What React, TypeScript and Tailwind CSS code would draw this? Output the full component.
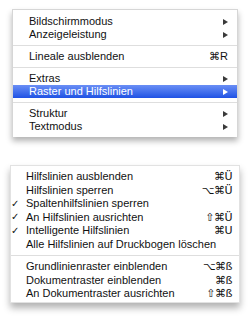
import React from "react";

type Item =
  | { sep: true }
  | { sep?: false; label: string; sub?: boolean; keys?: string; checked?: boolean; active?: boolean };

const topItems: Item[] = [
  { label: "Bildschirmmodus", sub: true },
  { label: "Anzeigeleistung", sub: true },
  { sep: true },
  { label: "Lineale ausblenden", keys: "⌘R" },
  { sep: true },
  { label: "Extras", sub: true },
  { label: "Raster und Hilfslinien", sub: true, active: true },
  { sep: true },
  { label: "Struktur", sub: true },
  { label: "Textmodus", sub: true },
];

const guideItems: Item[] = [
  { label: "Hilfslinien ausblenden", keys: "⌘Ü" },
  { label: "Hilfslinien sperren", keys: "⌥⌘Ü" },
  { label: "Spaltenhilfslinien sperren", checked: true },
  { label: "An Hilfslinien ausrichten", keys: "⇧⌘Ü", checked: true },
  { label: "Intelligente Hilfslinien", keys: "⌘U", checked: true },
  { label: "Alle Hilfslinien auf Druckbogen löschen" },
  { sep: true },
  { label: "Grundlinienraster einblenden", keys: "⌥⌘ß" },
  { label: "Dokumentraster einblenden", keys: "⌘ß" },
  { label: "An Dokumentraster ausrichten", keys: "⇧⌘ß" },
];

function Arrow({ light }: { light?: boolean }) {
  return (
    <svg width="5" height="6" viewBox="0 0 5 6" className="shrink-0">
      <path d="M0 0 L5 3 L0 6 Z" fill={light ? "#ffffff" : "#3a3a3a"} />
    </svg>
  );
}

function TopMenu() {
  return (
    <div className="ml-[12px] w-[226px] border-x border-t border-[#d6d6d6] bg-white pt-[5px] pb-[4px] shadow-[0_4px_6px_rgba(0,0,0,0.3)]">
      {topItems.map((it, i) =>
        it.sep ? (
          <div key={i} className="my-[4px] h-px bg-[#dedede]" />
        ) : (
          <div
            key={i}
            className={`flex h-[13px] items-center justify-between pl-[16px] pr-[9px] ${
              it.active ? "bg-gradient-to-b from-[#6a8ef5] to-[#1f51e4] text-white" : "text-[#111]"
            }`}
          >
            <span>{it.label}</span>
            {it.sub ? <Arrow light={it.active} /> : <span className="text-[11px]">{it.keys}</span>}
          </div>
        )
      )}
    </div>
  );
}

function GuideMenu() {
  return (
    <div className="ml-[10px] w-[230px] border border-[#e2e2e2] bg-white pt-[4px] pb-[1px] shadow-[0_5px_7px_rgba(0,0,0,0.3)]">
      {guideItems.map((it, i) =>
        it.sep ? (
          <div key={i} className="my-[4px] h-px bg-[#dedede]" />
        ) : (
          <div key={i} className="flex h-[13.5px] items-center pr-[7px] text-[#111]">
            <span className="w-[15px] shrink-0 text-[10px] leading-none">{it.checked ? "✓" : ""}</span>
            <span className="flex-1">{it.label}</span>
            <span className="text-[11px] font-['DejaVu_Sans',sans-serif] tracking-[-0.5px]">{it.keys}</span>
          </div>
        )
      )}
    </div>
  );
}

export default function App() {
  return (
    <div className="h-[328px] w-[250px] overflow-hidden bg-white pt-[9px] text-[11px] leading-none font-['Liberation_Sans',Arial,sans-serif]">
      <TopMenu />
      <div className="h-[28px]" />
      <GuideMenu />
    </div>
  );
}
